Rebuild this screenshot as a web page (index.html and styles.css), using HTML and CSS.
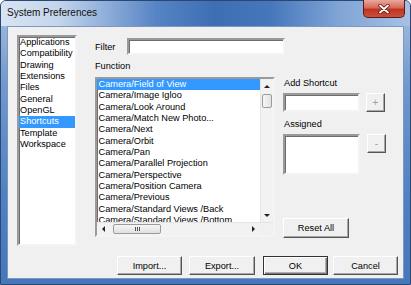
FILE: index.html
```html
<!DOCTYPE html>
<html lang="en">
<head>
    <meta charset="UTF-8">
    <title>System Preferences</title>
    <link rel="stylesheet" href="styles.css">
</head>
<body>
    <div class="window">
        <div class="titlebar">
            <span class="title">System Preferences</span>
            <div class="close">
                <svg width="14" height="10" viewBox="0 0 14 10">
                    <path d="M3 1.5 L11 8.5 M11 1.5 L3 8.5" stroke="#5a1a14" stroke-width="3.4" stroke-linecap="round"/>
                    <path d="M3 1.5 L11 8.5 M11 1.5 L3 8.5" stroke="#fff" stroke-width="1.8" stroke-linecap="round"/>
                </svg>
            </div>
        </div>

        <div class="client">
            <div class="content">
                <!-- Category list -->
                <ul class="listbox categories">
                    <li>Applications</li>
                    <li>Compatibility</li>
                    <li>Drawing</li>
                    <li>Extensions</li>
                    <li>Files</li>
                    <li>General</li>
                    <li>OpenGL</li>
                    <li class="selected">Shortcuts</li>
                    <li>Template</li>
                    <li>Workspace</li>
                </ul>

                <div class="main">
                    <div class="filter-row">
                        <label class="filter-label">Filter</label>
                        <div class="field filter-input"></div>
                    </div>
                    <div class="label function-label">Function</div>

                    <div class="function-row">
                        <!-- Function list with scrollbars -->
                        <div class="listbox functions">
                            <div class="functions-top">
                                <ul class="function-items">
                                    <li class="selected">Camera/Field of View</li>
                                    <li>Camera/Image Igloo</li>
                                    <li>Camera/Look Around</li>
                                    <li>Camera/Match New Photo...</li>
                                    <li>Camera/Next</li>
                                    <li>Camera/Orbit</li>
                                    <li>Camera/Pan</li>
                                    <li>Camera/Parallel Projection</li>
                                    <li>Camera/Perspective</li>
                                    <li>Camera/Position Camera</li>
                                    <li>Camera/Previous</li>
                                    <li>Camera/Standard Views /Back</li>
                                    <li>Camera/Standard Views /Bottom</li>
                                </ul>
                                <div class="vscroll">
                                    <div class="arrow-box"><span class="arrow up"></span></div>
                                    <div class="vthumb"></div>
                                    <div class="arrow-box bottom"><span class="arrow down"></span></div>
                                </div>
                            </div>
                            <div class="hscroll">
                                <div class="arrow-box side"><span class="arrow left"></span></div>
                                <div class="hthumb"><span class="grip"></span></div>
                                <div class="arrow-box side end"><span class="arrow right"></span></div>
                                <div class="corner"></div>
                            </div>
                        </div>

                        <div class="shortcut-panel">
                            <div class="label">Add Shortcut</div>
                            <div class="field-row add-row">
                                <div class="field short-input"></div>
                                <button class="btn small" disabled>+</button>
                            </div>
                            <div class="label assigned-label">Assigned</div>
                            <div class="field-row assigned-row">
                                <div class="field assigned-box"></div>
                                <button class="btn small minus" disabled>-</button>
                            </div>
                            <button class="btn reset">Reset All</button>
                        </div>
                    </div>
                </div>
            </div>

            <div class="footer">
                <button class="btn import">Import...</button>
                <button class="btn export">Export...</button>
                <button class="btn ok">OK</button>
                <button class="btn cancel">Cancel</button>
            </div>
        </div>
    </div>
</body>
</html>
```

FILE: styles.css
```css
body {
    margin: 0;
    padding: 0;
    width: 411px;
    height: 285px;
    overflow: hidden;
    font-family: "Liberation Sans", Arial, sans-serif;
    font-size: 9.2px;
    color: #000;
}
.window {
    position: relative;
    box-sizing: border-box;
    width: 411px;
    height: 285px;
    border: 1px solid #2b4773;
    border-radius: 6px 6px 0 0;
    background: linear-gradient(to bottom, #a9c1e0 0%, #6f98cd 30%, #4f80c2 70%, #4677bb 100%);
}
.titlebar {
    height: 25px;
    border-radius: 5px 5px 0 0;
    background: linear-gradient(to right, #d9e4f2 0%, #c4d5eb 14%, #8eadd9 26%, #5684c4 38%, #3e6fb4 52%, #4677bb 66%, #7ea3d5 82%, #a6c1e5 100%);
}
.title {
    display: block;
    padding-left: 6px;
    line-height: 24px;
    font-size: 10px;
    color: #111;
}
.close {
    position: absolute;
    top: -1px;
    right: 5px;
    width: 42px;
    height: 18px;
    box-sizing: border-box;
    border: 1px solid #5c1a12;
    border-top: none;
    border-radius: 0 0 5px 5px;
    background: linear-gradient(to bottom, #e9a99c 0%, #d66a58 45%, #bf3421 55%, #c9503a 100%);
    display: flex;
    justify-content: center;
    align-items: center;
}
.client {
    box-sizing: border-box;
    height: 253px;
    margin: 0 6px;
    border: 1px solid #7d98c0;
    background: #f0f0f0;
    display: flex;
    flex-direction: column;
}
.content {
    display: flex;
    padding: 8px 0 0 9px;
}

/* sunken boxes */
.listbox, .field {
    box-sizing: border-box;
    background: #fff;
    border: 2px solid;
    border-color: #9a9a9a #f4f4f4 #f4f4f4 #9a9a9a;
    box-shadow: inset 1px 1px 0 #6e6e6e;
}
ul {
    list-style: none;
    margin: 0;
    padding: 0;
}
li {
    line-height: 11.33px;
    padding-left: 1px;
    white-space: nowrap;
}
li.selected {
    background: #3399ff;
    color: #fff;
}
.categories {
    width: 60px;
    height: 211px;
    padding: 0;
}

.main {
    margin-left: 17px;
    display: flex;
    flex-direction: column;
}
.filter-row {
    display: flex;
    align-items: center;
    margin-top: 3px;
    height: 17px;
}
.filter-label {
    width: 32px;
    padding-left: 1px;
}
.filter-input {
    width: 158px;
    height: 17px;
}
.label {
    line-height: 12px;
    padding-left: 1px;
}
.function-label {
    margin-top: 5px;
}
.function-row {
    display: flex;
    margin-top: 5px;
}

.functions {
    width: 180px;
    height: 160px;
    margin-left: 1px;
    display: flex;
    flex-direction: column;
}
.functions-top {
    display: flex;
    height: 143px;
}
.function-items {
    width: 163px;
    overflow: hidden;
}
.function-items li {
    padding-left: 1.5px;
}
.vscroll {
    width: 13px;
    background: #f2f2f2;
    border-left: 1px solid #e4e4e4;
    box-sizing: border-box;
    display: flex;
    flex-direction: column;
}
.arrow-box {
    height: 14px;
    display: flex;
    justify-content: center;
    align-items: center;
}
.arrow-box.bottom {
    margin-top: auto;
}
.arrow-box.side {
    width: 13px;
    height: auto;
}
.arrow-box.end {
    margin-left: auto;
}
.arrow {
    width: 0;
    height: 0;
    border: 3px solid transparent;
}
.arrow.up {
    border-bottom-color: #222;
    border-top-width: 0;
}
.arrow.down {
    border-top-color: #222;
    border-bottom-width: 0;
}
.arrow.left {
    border-right-color: #222;
    border-left-width: 0;
}
.arrow.right {
    border-left-color: #222;
    border-right-width: 0;
}
.vthumb {
    height: 14px;
    margin: 1px 0 0 1px;
    width: 10px;
    box-sizing: border-box;
    border: 1px solid #9b9b9b;
    border-radius: 2px;
    background: linear-gradient(to right, #f6f6f6, #e2e2e2);
}
.hscroll {
    height: 13px;
    display: flex;
    background: #f2f2f2;
    border-top: 1px solid #e4e4e4;
    box-sizing: border-box;
}
.hthumb {
    width: 48px;
    margin: 1px 0 0 3px;
    height: 10px;
    box-sizing: border-box;
    border: 1px solid #9b9b9b;
    border-radius: 2px;
    background: linear-gradient(to bottom, #f6f6f6, #e0e0e0);
    display: flex;
    justify-content: center;
    align-items: center;
}
.grip {
    width: 5px;
    height: 4px;
    background: repeating-linear-gradient(to right, #555 0 1px, transparent 1px 2px);
}
.corner {
    width: 13px;
    background: #f0f0f0;
}

.shortcut-panel {
    margin-left: 8px;
    height: 161px;
    display: flex;
    flex-direction: column;
}
.field-row {
    display: flex;
    align-items: flex-start;
}
.add-row {
    margin-top: 4px;
}
.assigned-label {
    margin-top: 6px;
}
.assigned-row {
    margin-top: 4px;
}
.short-input {
    width: 77px;
    height: 19px;
}
.assigned-box {
    width: 77px;
    height: 41px;
}

/* classic 3D buttons */
.btn {
    box-sizing: border-box;
    height: 19px;
    padding: 0;
    font-family: "Liberation Sans", Arial, sans-serif;
    font-size: 9.2px;
    color: #000;
    background: #f0f0f0;
    border: 1px solid;
    border-color: #fff #555 #555 #fff;
    box-shadow: inset -1px -1px 0 #a8a8a8;
}
.btn.small {
    width: 19px;
    margin-left: 6px;
    color: #a0a0a0;
    font-size: 10px;
}
.btn.minus {
    margin-left: 7px;
}
.btn.reset {
    margin-top: auto;
    width: 66px;
    height: 20px;
}
.footer {
    display: flex;
    justify-content: flex-end;
    margin-top: 10px;
    padding-right: 5px;
}
.import {
    width: 65px;
}
.export {
    width: 66px;
    margin-left: 7px;
}
.ok {
    width: 65px;
    margin-left: 8px;
    border: 1px solid #333;
    box-shadow: inset 1px 1px 0 #fff, inset -1px -1px 0 #777, inset -2px -2px 0 #b0b0b0;
}
.cancel {
    width: 65px;
    margin-left: 5px;
}
```
